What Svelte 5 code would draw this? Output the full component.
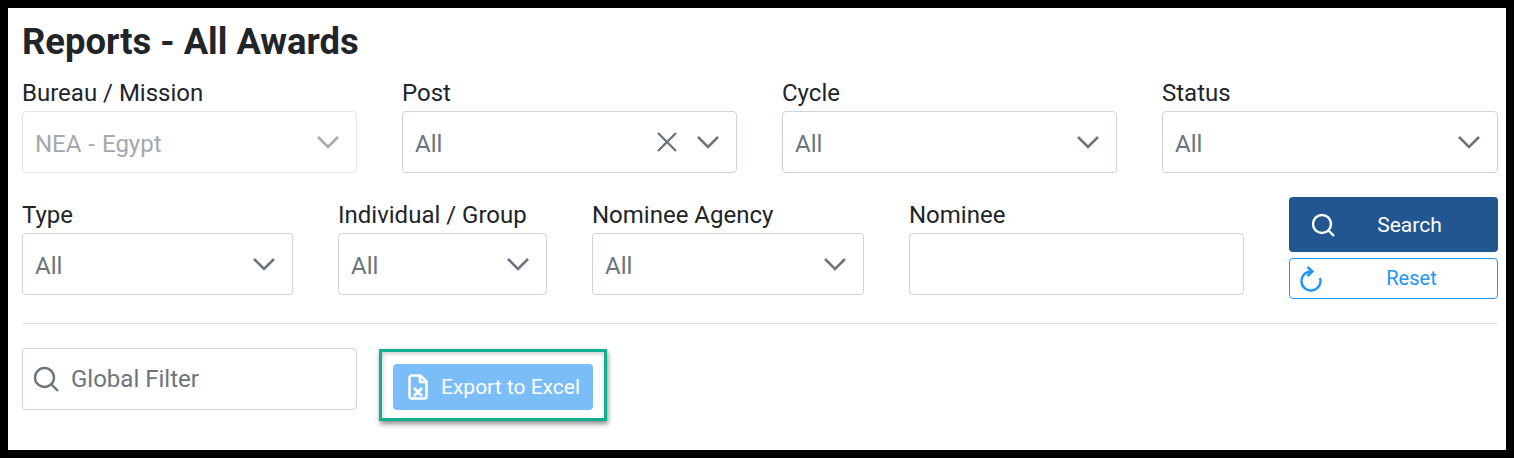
<script>
  const topFilters = [
    { label: 'Bureau / Mission', value: 'NEA - Egypt', disabled: true },
    { label: 'Post', value: 'All', clear: true },
    { label: 'Cycle', value: 'All' },
    { label: 'Status', value: 'All' }
  ];
  const lowerFilters = [
    { label: 'Type', value: 'All', cls: 'w-type' },
    { label: 'Individual / Group', value: 'All', cls: 'w-group' },
    { label: 'Nominee Agency', value: 'All', cls: 'w-agency' }
  ];
</script>

{#snippet select(f)}
  <div class="field {f.cls || ''}">
    <span class="label">{f.label}</span>
    <div class="control" class:disabled={f.disabled}>
      <span class="value">{f.value}</span>
      {#if f.clear}
        <svg class="clear" width="22" height="22" viewBox="0 0 22 22"><path d="M2 2 L20 20 M20 2 L2 20" /></svg>
      {/if}
      <svg class="chevron" width="24" height="14" viewBox="0 0 24 14"><path d="M2 2 L12 12 L22 2" /></svg>
    </div>
  </div>
{/snippet}

<main class="panel">
  <h1>Reports - All Awards</h1>

  <div class="row-top">
    {#each topFilters as f}
      {@render select(f)}
    {/each}
  </div>

  <div class="row-lower">
    {#each lowerFilters as f}
      {@render select(f)}
    {/each}
    <div class="field w-nominee">
      <span class="label">Nominee</span>
      <div class="control"></div>
    </div>
    <div class="actions">
      <button class="btn-search">
        <svg width="24" height="24" viewBox="0 0 24 24"><circle cx="11" cy="11" r="9" /><path d="M17.5 17.5 L23 23" /></svg>
        <span>Search</span>
      </button>
      <button class="btn-reset">
        <svg width="24" height="26" viewBox="0 0 24 26"><path d="M12 5.5 A9.5 9.5 0 1 0 21 12" /><path d="M8.5 1 L13.5 5.5 L8.5 10" /></svg>
        <span>Reset</span>
      </button>
    </div>
  </div>

  <hr />

  <div class="row-bottom">
    <div class="control global">
      <svg width="26" height="26" viewBox="0 0 26 26"><circle cx="11.5" cy="11.5" r="9.5" /><path d="M18.5 18.5 L25 25" /></svg>
      <span>Global Filter</span>
    </div>
    <div class="highlight">
      <button class="btn-export">
        <svg width="20" height="26" viewBox="0 0 20 26">
          <path d="M12.5 1.5 H4 A2.5 2.5 0 0 0 1.5 4 V22 A2.5 2.5 0 0 0 4 24.5 H16 A2.5 2.5 0 0 0 18.5 22 V7.5 Z" />
          <path d="M12 2 V8 H18" />
          <path class="x" d="M6 14 L14 22 M14 14 L6 22" />
        </svg>
        <span>Export to Excel</span>
      </button>
    </div>
  </div>
</main>

<style>
  :global(body) {
    background: #000;
  }
  .panel {
    box-sizing: border-box;
    width: 1498px;
    height: 442px;
    margin: 8px;
    padding: 14px 8px 0 14px;
    background: #fff;
    font-family: Roboto, sans-serif;
    color: #212529;
  }
  h1 {
    margin: 0;
    font-size: 36.4px;
    line-height: 40px;
    font-weight: 700;
  }
  .row-top {
    display: grid;
    grid-template-columns: 335px 335px 335px 336px;
    gap: 45px;
    margin-top: 12px;
  }
  .row-lower {
    display: flex;
    gap: 45px;
    margin-top: 23px;
  }
  .w-type { width: 271px; }
  .w-group { width: 209px; }
  .w-agency { width: 272px; }
  .w-nominee { width: 335px; }
  .label {
    display: block;
    padding-top: 2px;
    font-size: 24px;
    line-height: 35px;
  }
  .control {
    box-sizing: border-box;
    display: flex;
    align-items: center;
    height: 62px;
    padding: 0 16px 0 12px;
    border: 1px solid #ced4da;
    border-radius: 4px;
    font-size: 24px;
    color: #6c757d;
  }
  .value {
    flex: 1;
    padding-top: 4px;
    word-spacing: 1px;
  }
  .control.disabled {
    border-color: #e3e6e9;
    color: #a4a9ae;
  }
  svg path, svg circle {
    fill: none;
    stroke: currentColor;
    stroke-width: 2.4;
  }
  .chevron path {
    stroke-width: 2.6;
  }
  .clear {
    margin-right: 18px;
  }
  .actions {
    width: 209px;
    padding-top: 1px;
    display: flex;
    flex-direction: column;
    gap: 6px;
  }
  button {
    display: flex;
    align-items: center;
    box-sizing: border-box;
    font-family: inherit;
    cursor: pointer;
  }
  .btn-search {
    height: 55px;
    padding: 0 22px;
    background: #225691;
    border: 0;
    border-radius: 4px;
    color: #fff;
    font-size: 21px;
  }
  .btn-search span {
    flex: 1;
    padding-left: 8px;
    text-align: center;
  }
  .btn-reset {
    height: 41px;
    padding: 0 10px 0 9px;
    background: #fff;
    border: 1px solid #2196f3;
    border-radius: 4px;
    color: #2196f3;
    font-size: 20px;
  }
  .btn-reset span {
    flex: 1;
    padding: 0 0 2px 13px;
    text-align: center;
  }
  hr {
    margin: 24px 0 0;
    border: 0;
    border-top: 1px solid #dee2e6;
  }
  .row-bottom {
    display: flex;
    margin-top: 24px;
  }
  .global {
    width: 335px;
    padding: 0 10px;
    gap: 12px;
  }
  .highlight {
    margin: 1px 0 0 22px;
    height: 72px;
    width: 228px;
    box-sizing: border-box;
    padding: 12px 11px;
    border: 3px solid #10b08e;
    box-shadow: 1px 3px 5px rgba(0, 0, 0, 0.45), inset 1px 2px 4px rgba(0, 0, 0, 0.2);
  }
  .btn-export {
    gap: 13px;
    width: 200px;
    height: 46px;
    padding: 0 0 0 15px;
    background: #7abdf8;
    border: 0;
    border-radius: 4px;
    color: #fff;
    font-size: 21px;
  }
  .btn-export svg path {
    stroke-width: 2.6;
  }
  .btn-export svg .x {
    stroke-width: 3;
  }
</style>
